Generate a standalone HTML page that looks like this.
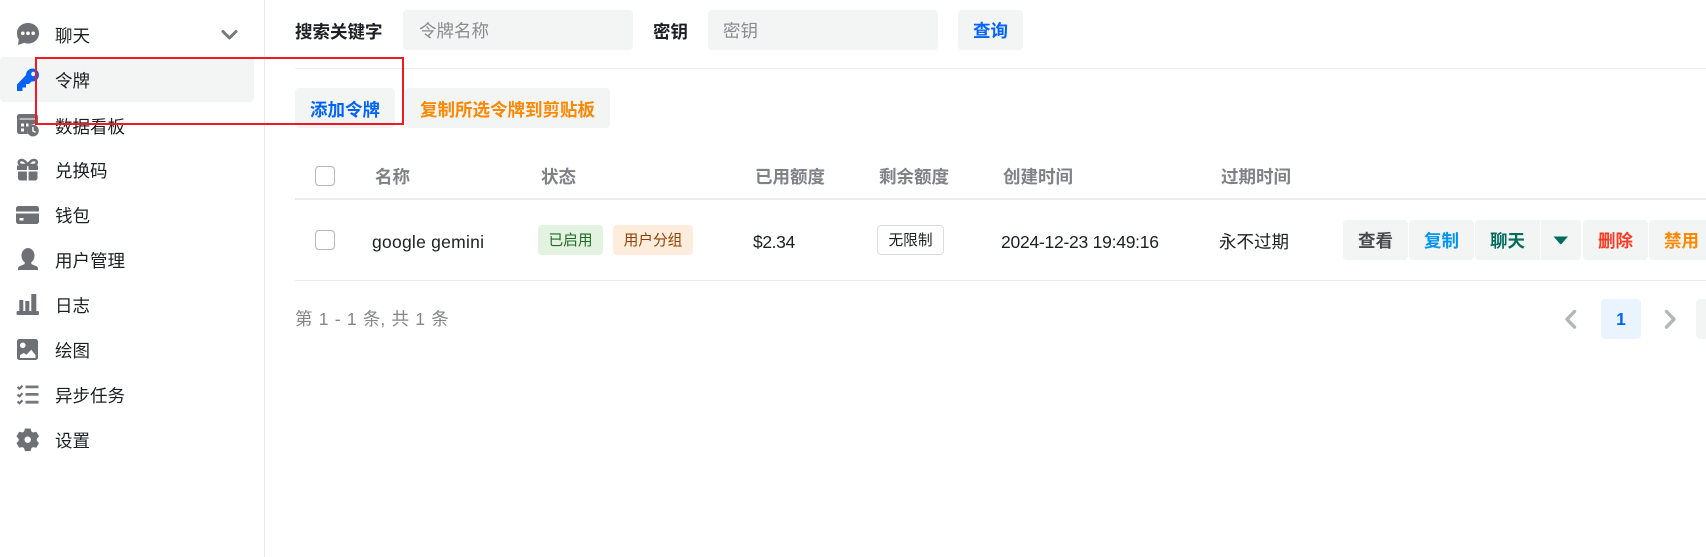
<!DOCTYPE html>
<html lang="zh">
<head>
<meta charset="utf-8">
<title>令牌</title>
<style>
html,body{margin:0;padding:0;background:#fff;}
body{width:1706px;height:557px;position:relative;overflow:hidden;font-family:"Liberation Sans","Noto Sans CJK SC",sans-serif;font-size:17.5px;color:#1c1f23;}
.t{position:absolute;white-space:nowrap;line-height:24px;height:24px;}
.box{position:absolute;border-radius:4px;background:#f3f4f4;}
.b{font-weight:700;}
.h{font-weight:700;color:#808187;}
.btn{position:absolute;top:220px;height:40px;line-height:43px;text-align:center;font-weight:700;background:#f3f4f4;border-radius:4px;}
.tag{position:absolute;top:225px;height:30px;line-height:33px;text-align:center;font-size:14.7px;border-radius:4px;box-sizing:border-box;}
.cb{position:absolute;left:315px;width:20px;height:20px;box-sizing:border-box;border:1.5px solid #b5b6b9;border-radius:4px;background:#fff;}
.line{position:absolute;left:295px;width:1411px;}
svg{position:absolute;left:0;top:0;}
</style>
</head>
<body>
<div style="position:absolute;left:264px;top:0;width:1px;height:557px;background:#e9eaea;"></div>
<div class="box" style="left:0;top:57px;width:254px;height:45px;"></div>

<div class="t" style="left:55px;top:24px;">聊天</div>
<div class="t" style="left:55px;top:69px;">令牌</div>
<div class="t" style="left:55px;top:115px;">数据看板</div>
<div class="t" style="left:55px;top:159px;">兑换码</div>
<div class="t" style="left:55px;top:204px;">钱包</div>
<div class="t" style="left:55px;top:249px;">用户管理</div>
<div class="t" style="left:55px;top:294px;">日志</div>
<div class="t" style="left:55px;top:339px;">绘图</div>
<div class="t" style="left:55px;top:384px;">异步任务</div>
<div class="t" style="left:55px;top:429px;">设置</div>

<div class="t b" style="left:295px;top:20px;">搜索关键字</div>
<div class="box" style="left:403px;top:10px;width:230px;height:40px;"></div>
<div class="t" style="left:419px;top:19px;color:#8b8c90;">令牌名称</div>
<div class="t b" style="left:653px;top:20px;">密钥</div>
<div class="box" style="left:708px;top:10px;width:230px;height:40px;"></div>
<div class="t" style="left:723px;top:19px;color:#8b8c90;">密钥</div>
<div class="box" style="left:958px;top:10px;width:65px;height:40px;"></div>
<div class="t b" style="left:973px;top:19px;color:#0064fa;">查询</div>

<div class="line" style="top:68px;height:1px;background:#ececed;"></div>

<div class="box" style="left:295px;top:88px;width:100px;height:40px;"></div>
<div class="t b" style="left:310px;top:98px;color:#0064fa;">添加令牌</div>
<div class="box" style="left:405px;top:88px;width:205px;height:40px;"></div>
<div class="t b" style="left:420px;top:98px;color:#fc8800;">复制所选令牌到剪贴板</div>

<div class="cb" style="top:166px;"></div>
<div class="t h" style="left:375px;top:165px;">名称</div>
<div class="t h" style="left:541px;top:165px;">状态</div>
<div class="t h" style="left:755px;top:165px;">已用额度</div>
<div class="t h" style="left:879px;top:165px;">剩余额度</div>
<div class="t h" style="left:1003px;top:165px;">创建时间</div>
<div class="t h" style="left:1221px;top:165px;">过期时间</div>
<div class="line" style="top:198px;height:2px;background:#ececed;"></div>

<div class="cb" style="top:230px;"></div>
<div class="t" style="left:372px;top:230px;letter-spacing:.25px;">google gemini</div>
<div class="tag" style="left:538px;width:65px;background:#e4f3e1;color:#1b6b22;">已启用</div>
<div class="tag" style="left:613px;width:80px;background:#feeddd;color:#8f3f00;">用户分组</div>
<div class="t" style="left:753px;top:230px;letter-spacing:-.4px;">$2.34</div>
<div class="tag" style="left:877px;width:67px;background:#fff;border:1px solid #dcdddf;line-height:31px;">无限制</div>
<div class="t" style="left:1001px;top:230px;letter-spacing:-.25px;">2024-12-23 19:49:16</div>
<div class="t" style="left:1219px;top:230px;">永不过期</div>

<div class="btn" style="left:1343px;width:65px;color:#46484c;">查看</div>
<div class="btn" style="left:1409px;width:65px;color:#0095ee;">复制</div>
<div class="btn" style="left:1475px;width:65px;color:#046b5f;border-radius:4px 0 0 4px;">聊天</div>
<div class="btn" style="left:1541px;width:40px;border-radius:0 4px 4px 0;"></div>
<div class="btn" style="left:1583px;width:65px;color:#f93920;">删除</div>
<div class="btn" style="left:1649px;width:65px;color:#fc8800;">禁用</div>

<div class="line" style="top:280px;height:1px;background:#ececed;"></div>

<div class="t" style="left:295px;top:307px;color:#85868b;word-spacing:1.4px;">第 1 - 1 条, 共 1 条</div>
<div class="box" style="left:1601px;top:299px;width:40px;height:40px;background:#eaf4ff;"></div>
<div class="t" style="left:1601px;top:307px;width:40px;text-align:center;font-weight:700;color:#0064fa;">1</div>
<div class="box" style="left:1696px;top:299px;width:40px;height:40px;"></div>

<svg width="1706" height="557" viewBox="0 0 1706 557">
  <!-- chevron -->
  <path d="M223 31.500l6.500 6.500 6.500-6.500" fill="none" stroke="#77787d" stroke-width="3" stroke-linecap="round" stroke-linejoin="round"/>
  <!-- chat -->
  <path fill="#6f7076" fill-rule="evenodd" d="M28 23c6.200 0 11 4.400 11 10.200S34.200 43.500 28 43.500c-1.300 0-2.600-.2-3.800-.6L18 45l.7-5.400C17.600 37.800 17 35.600 17 33.200 17 27.400 21.800 23 28 23zM22.800 31.500a1.800 1.800 0 100 3.600 1.800 1.800 0 000-3.600zm5.200 0a1.800 1.800 0 100 3.600 1.800 1.800 0 000-3.600zm5.200 0a1.800 1.800 0 100 3.600 1.800 1.800 0 000-3.600z"/>
  <!-- key -->
  <path fill="#0064fa" d="M27 74L17 84.500V91h5.500v-3.500H26V84h3l4-4z"/>
  <path fill="#0064fa" fill-rule="evenodd" d="M32.500 68.500a6.500 6.500 0 100 13 6.500 6.500 0 000-13zM33.300 71.800a2.200 2.200 0 110 4.400 2.200 2.200 0 010-4.400z"/>
  <!-- data board -->
  <path fill="#6f7076" fill-rule="evenodd" d="M19.500 114h16c1.400 0 2.500 1.100 2.500 2.500v8.300a7.300 7.300 0 00-10.200 9.200H19.500c-1.400 0-2.500-1.100-2.500-2.500v-15c0-1.400 1.100-2.500 2.500-2.500zM19.500 118.500v1h16v-1zM21 123.500v3h3v-3zm5 0v3h2.500v-3zm-5 5v3h3v-3z"/>
  <path fill="#6f7076" fill-rule="evenodd" d="M33 124.800a5.800 5.800 0 110 11.600 5.800 5.800 0 010-11.600zm-.8 2.200v4.300l3 1.700.7-1.200-2.300-1.300V127z"/>
  <!-- gift -->
  <path fill="#6f7076" d="M17 165.500h9.900v4.500H17zM28.600 165.500H38v4.500h-9.400zM18 171.500h8.900v9h-6.400c-1.400 0-2.500-1.100-2.500-2.500zM28.600 171.500h8.900v6.500c0 1.400-1.100 2.500-2.500 2.500h-6.400z"/>
  <path fill="none" stroke="#6f7076" stroke-width="2.600" d="M27.800 165c-2-3.400-4-5-6-5-2 0-3 1.200-3 2.500s1.200 2.500 3.200 2.500zM27.800 165c2-3.400 4-5 6-5 2 0 3 1.200 3 2.500s-1.200 2.500-3.200 2.500z"/>
  <!-- card -->
  <path fill="#6f7076" fill-rule="evenodd" d="M18.500 206h18c1.400 0 2.500 1.100 2.500 2.500v3H16v-3c0-1.400 1.100-2.500 2.500-2.500zM16 213.500h23v8c0 1.400-1.100 2.500-2.500 2.500h-18c-1.400 0-2.500-1.100-2.500-2.500zM19.500 218v2.500h4V218z"/>
  <!-- user -->
  <path fill="#6f7076" d="M27.500 248c4.300 0 7 3.400 7 7.500 0 3-1.300 5.500-3.200 6.800v.9c0 .6.300 1 .8 1.200l4.200 1.700c.9.400 1.700 1.200 1.700 2.200v1.700H18v-1.700c0-1 .8-1.800 1.700-2.200l4.200-1.700c.5-.2.800-.6.800-1.200v-.9c-1.900-1.300-3.200-3.800-3.200-6.800 0-4.100 2.700-7.500 7-7.500z"/>
  <!-- histogram -->
  <path fill="#6f7076" d="M19.300 300h4v12h-4zM25.300 301h4v11h-4zM31.300 294h5v18h-5zM17.500 311h20.500a.9.900 0 01.9.900v2.200a.9.900 0 01-.9.900H17.500a.9.900 0 01-.9-.9v-2.200a.9.900 0 01.9-.9z"/>
  <!-- image -->
  <path fill="#6f7076" fill-rule="evenodd" d="M19.500 339h16c1.400 0 2.500 1.100 2.500 2.500v16c0 1.400-1.100 2.500-2.500 2.500h-16c-1.400 0-2.500-1.100-2.500-2.500v-16c0-1.400 1.100-2.500 2.500-2.500zM22.800 342.500a2.800 2.800 0 100 5.600 2.800 2.800 0 000-5.600zM20 358h15.500v-3l-4.300-5.300-4.700 5-2.600-1.700L20 355z"/>
  <!-- tasks -->
  <path fill="none" stroke="#6f7076" stroke-width="2.100" d="M17.500 387l2 1.800 3-3M17.500 394.500l2 1.800 3-3M17.500 401.500l2 1.800 3-3"/>
  <path fill="#77787d" d="M25.500 385.500h13v2.800h-13zM25.500 393h13v2.800h-13zM25.500 400.800h13v2.800h-13z"/>
  <!-- gear -->
  <path fill="#6f7076" fill-rule="evenodd" d="M25 428.500h5.500l1 3.100 1.600.9 3.200-.7 2.700 4.700-2.200 2.400v1.800l2.200 2.400-2.700 4.700-3.200-.7-1.600.9-1 3.100H25l-1-3.100-1.600-.9-3.200.7-2.700-4.700 2.200-2.400v-1.800l-2.200-2.400 2.700-4.700 3.200.7 1.600-.9zM27.700 436.500a3.200 3.200 0 100 6.400 3.200 3.200 0 000-6.400z"/>
  <!-- dropdown caret -->
  <path fill="#046b5f" d="M1553.500 236.500h14.500l-6.300 7.300a1.200 1.200 0 01-1.800 0z"/>
  <!-- pagination chevrons -->
  <path d="M1574.500 311.500l-7.500 7.800 7.500 7.800" fill="none" stroke="#b4b5b7" stroke-width="3.400" stroke-linecap="round" stroke-linejoin="round"/>
  <path d="M1666.500 311.500l7.500 7.800-7.500 7.800" fill="none" stroke="#b4b5b7" stroke-width="3.400" stroke-linecap="round" stroke-linejoin="round"/>
</svg>

<div style="position:absolute;left:35px;top:57px;width:369px;height:68px;box-sizing:border-box;border:2px solid #ed1c24;"></div>
</body>
</html>
